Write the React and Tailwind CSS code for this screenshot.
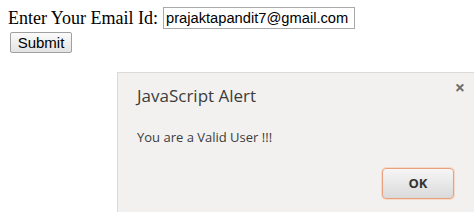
import React, { useState } from "react";

export default function App() {
  const [email, setEmail] = useState("prajaktapandit7@gmail.com");

  return (
    <div className="relative w-[474px] h-[217px] bg-white overflow-hidden">
      <form className="pt-[7px] pl-[8px]" onSubmit={(e) => e.preventDefault()}>
        <div className="flex items-center h-[22px]">
          <label className="text-[18px] text-black font-['Liberation_Serif',serif] mr-[5px]">
            Enter Your Email Id:
          </label>
          <input
            className="w-[192px] h-[22px] border border-[#a9a9a9] px-[2px] text-[14.7px] text-black font-['Liberation_Sans',sans-serif] outline-none"
            value={email}
            onChange={(e) => setEmail(e.target.value)}
          />
        </div>
        <button
          type="submit"
          className="mt-[3px] ml-[2px] w-[62px] h-[21px] border border-[#a0a0a0] rounded-[2px] bg-gradient-to-b from-[#fbfbfb] to-[#e3e3e3] text-[15px] text-black font-['Liberation_Sans',sans-serif] leading-none"
        >
          Submit
        </button>
      </form>

      <div className="absolute left-[117px] top-[72px] right-0 h-[140px] bg-[#f2f1f0] border-t border-l border-[#dcdad7] font-['Open_Sans','Noto_Sans',sans-serif]">
        <div className="flex justify-between items-start">
          <div className="pl-[19px] pt-[11px] text-[17px] text-[#3c3c3c] leading-[24px]">
            JavaScript Alert
          </div>
          <div className="pr-[9px] pt-[3px] text-[18px] text-[#6e6e6e] font-bold leading-[22px]">
            ×
          </div>
        </div>
        <div className="pl-[19px] pt-[20px] text-[13px] text-[#3c3c3c] leading-[18px]">
          You are a Valid User !!!
        </div>
        <div className="flex justify-end pr-[20px] pt-[22px]">
          <button className="w-[72px] h-[31px] rounded-[4px] border border-[#e9a07e] bg-gradient-to-b from-[#f6f6f6] to-[#dadada] shadow-[0_0_0_1px_#f7d9c9] text-[13px] font-bold text-[#333]">
            OK
          </button>
        </div>
      </div>
    </div>
  );
}
